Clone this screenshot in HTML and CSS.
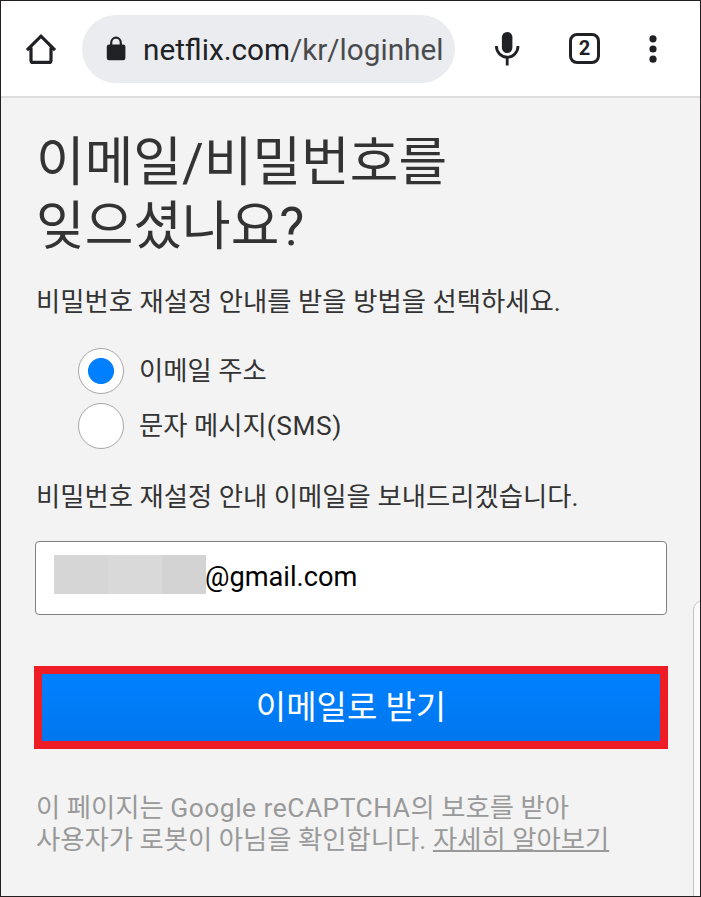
FILE: index.html
```html
<!DOCTYPE html>
<html lang="ko">
<head>
    <meta charset="UTF-8">
    <meta name="viewport" content="width=device-width, initial-scale=1.0">
    <title>이메일/비밀번호를 잊으셨나요?</title>
    <link rel="stylesheet" href="styles.css">
</head>
<body>
    <div class="screen">
        <!-- Barra del navegador -->
        <header class="browser-bar">
            <svg class="icon-home" width="32" height="32" viewBox="0 0 32 32">
                <path d="M2 17.2 16 3.2 30 17.2M6 14.5V27.4Q6 29.4 8 29.4H24Q26 29.4 26 27.4V14.5" fill="none" stroke="#202124" stroke-width="3.2"/>
            </svg>
            <div class="url-bar">
                <svg class="icon-lock" width="20" height="26" viewBox="0 0 20 26">
                    <path d="M5.2 10V6.7a4.8 5 0 0 1 9.6 0V10" fill="none" stroke="#202124" stroke-width="2.2"/>
                    <rect x="0.8" y="8.5" width="18.6" height="15.7" rx="2.2" fill="#202124"/>
                </svg>
                <span class="url"><span class="domain">netflix.com</span>/kr/loginhel</span>
            </div>
            <svg class="icon-mic" width="26" height="36" viewBox="0 0 26 36">
                <rect x="7.9" y="1" width="10.5" height="21" rx="5.2" fill="#202124"/>
                <path d="M2.4 15a10.8 11.2 0 0 0 21.6 0M13.2 26.5V34.5" fill="none" stroke="#202124" stroke-width="2.8"/>
            </svg>
            <div class="tabs">2</div>
            <svg class="icon-menu" width="8" height="28" viewBox="0 0 8 28">
                <circle cx="4" cy="3.8" r="3.6"/>
                <circle cx="4" cy="14" r="3.6"/>
                <circle cx="4" cy="24.2" r="3.6"/>
            </svg>
        </header>

        <main class="content">
            <h1>이메일/비밀번호를<br>잊으셨나요?</h1>
            <p class="intro">비밀번호 재설정 안내를 받을 방법을 선택하세요.</p>
            <div class="options">
                <label class="option"><input type="radio" name="method" checked><span>이메일 주소</span></label>
                <label class="option"><input type="radio" name="method"><span>문자 메시지<span class="latin">(SMS)</span></span></label>
            </div>
            <p class="hint">비밀번호 재설정 안내 이메일을 보내드리겠습니다.</p>
            <div class="field">
                <span class="mask"></span>
                <span class="mail">@gmail.com</span>
            </div>
            <button class="btn">이메일로 받기</button>
            <p class="captcha">이 페이지는 <span class="latin">Google reCAPTCHA</span>의 보호를 받아<br>사용자가 로봇이 아님을 확인합니다. <a href="#">자세히 알아보기</a></p>
        </main>
        <div class="side-handle"></div>
    </div>
</body>
</html>
```
FILE: styles.css
```css
* {
    margin: 0;
    padding: 0;
    box-sizing: border-box;
}

body {
    font-family: Roboto, 'Noto Sans CJK KR', sans-serif;
    background-color: #f3f3f3;
    color: #333;
    overflow: hidden;
}

.screen {
    position: relative;
    width: 701px;
    height: 897px;
    border: 1px solid #231f20;
    overflow: hidden;
}

.browser-bar {
    display: flex;
    align-items: center;
    height: 97px;
    padding-left: 24px;
    background-color: #fff;
    border-bottom: 2px solid #dedede;
}

.url-bar {
    display: flex;
    align-items: center;
    width: 373px;
    height: 68px;
    margin-left: 25px;
    padding-left: 24px;
    border-radius: 34px;
    background-color: #ebecf0;
}

.url {
    margin-left: 17px;
    padding-top: 2px;
    font-size: 29.7px;
    line-height: 36px;
    white-space: nowrap;
    color: #4a4b4d;
}

.domain {
    color: #202124;
}

.icon-mic {
    margin-left: 39px;
}

.tabs {
    width: 31px;
    height: 31px;
    margin-left: 49px;
    border: 3px solid #202124;
    border-radius: 8px;
    font-size: 20px;
    font-weight: 700;
    line-height: 25px;
    text-align: center;
    color: #202124;
}

.icon-menu {
    margin-left: 49px;
    fill: #202124;
}

.content {
    padding: 33px 33px 0 35px;
    font-size: 26.37px;
    line-height: 32px;
}

h1 {
    font-size: 52.9px;
    font-weight: 400;
    line-height: 64px;
}

.intro {
    margin-top: 27px;
}

.options {
    display: flex;
    flex-direction: column;
    gap: 9px;
    margin: 30px 0 0 42px;
}

.option {
    display: flex;
    align-items: center;
    gap: 15px;
    height: 46px;
}

.option input {
    appearance: none;
    width: 46px;
    height: 46px;
    border: 1px solid #a6a6a6;
    border-radius: 50%;
    background-color: #fff;
}

.option input:checked {
    background-image: radial-gradient(circle, #0080ff 12.6px, transparent 13.4px);
}

.latin {
    letter-spacing: 0.5px;
}

.hint {
    margin-top: 32px;
}

.field {
    display: flex;
    width: 632px;
    height: 74px;
    margin: 28px 0 0 -1px;
    padding: 13px 18px;
    border: 1px solid #808080;
    border-radius: 4px;
    background-color: #fff;
    color: #000;
}

.mask {
    width: 152px;
    height: 39px;
    background: linear-gradient(90deg, #d6d6d6 54px, #d9d9d9 54px, #d9d9d9 108px, #d3d3d3 108px);
}

.mail {
    margin-left: -1px;
    font-size: 27.2px;
    line-height: 45px;
}

.btn {
    display: block;
    width: 634px;
    height: 83px;
    margin: 51px 0 0 -2px;
    padding-bottom: 5px;
    border: 8px solid #ee1c25;
    background: linear-gradient(#0080ff, #0077ee) padding-box;
    font-family: inherit;
    font-size: 33px;
    color: #fff;
}

.captcha {
    margin-top: 43px;
    color: #999;
}

.captcha a {
    color: inherit;
    text-decoration-thickness: 2px;
}

/* Borde del panel lateral */
.side-handle {
    position: absolute;
    top: 599px;
    right: -10px;
    width: 17px;
    height: 310px;
    border: 1px solid #c4c4c4;
    border-radius: 10px 0 0 0;
    background-color: #fafafa;
}
```
